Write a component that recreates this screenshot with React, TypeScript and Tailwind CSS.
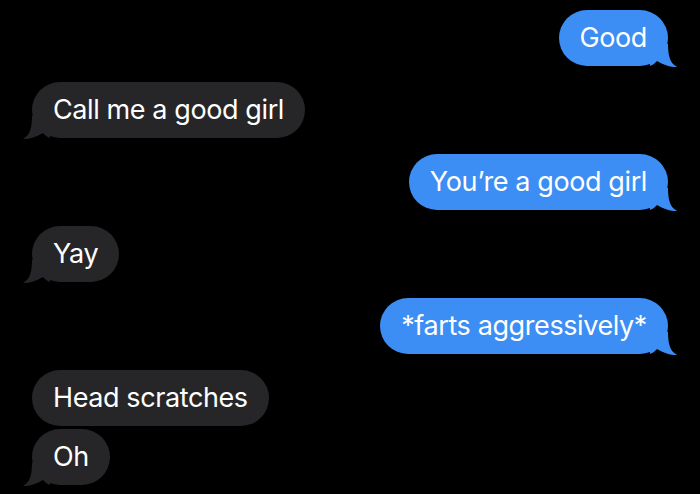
import type { ReactNode } from 'react'

type Side = 'me' | 'them'

const messages: { side: Side; text: string; tail: boolean; gap?: string }[] = [
  { side: 'me', text: 'Good', tail: true },
  { side: 'them', text: 'Call me a good girl', tail: true },
  { side: 'me', text: 'You\u2019re a good girl', tail: true },
  { side: 'them', text: 'Yay', tail: true },
  { side: 'me', text: '*farts aggressively*', tail: true },
  { side: 'them', text: 'Head scratches', tail: false },
  { side: 'them', text: 'Oh', tail: true, gap: 'mt-[3px]' },
]

function Tail({ side }: { side: Side }) {
  const color = side === 'me' ? '#3c8df4' : '#262628'
  return (
    <svg
      width="27"
      height="23"
      viewBox="0 0 27 23"
      className={
        side === 'me'
          ? 'absolute right-[-9px] bottom-[-1px]'
          : 'absolute left-[-9px] bottom-[-1px] -scale-x-100'
      }
    >
      <path
        d="M0 22 L0 0 L18 0 C18 12 20 19 27 23 C22 23.5 15 21.5 7 17 C5 19 3 21 0 22 Z"
        fill={color}
      />
    </svg>
  )
}

function Bubble({ side, tail, children }: { side: Side; tail: boolean; children: ReactNode }) {
  return (
    <div
      className={`relative h-[56px] flex items-center px-[21px] rounded-[28px] text-[27px] text-white tracking-[-0.4px] ${
        side === 'me' ? 'bg-[#3c8df4]' : 'bg-[#262628]'
      }`}
    >
      {tail && <Tail side={side} />}
      <span className="relative">{children}</span>
    </div>
  )
}

export default function App() {
  return (
    <div
      className="w-[700px] h-[494px] bg-black overflow-hidden px-8 pt-[10px]"
      style={{ fontFamily: 'Inter, "Liberation Sans", sans-serif' }}
    >
      {messages.map((m, i) => (
        <div
          key={i}
          className={`flex ${m.side === 'me' ? 'justify-end' : 'justify-start'} ${
            i === 0 ? '' : m.gap ?? 'mt-4'
          }`}
        >
          <Bubble side={m.side} tail={m.tail}>
            {m.text}
          </Bubble>
        </div>
      ))}
    </div>
  )
}
